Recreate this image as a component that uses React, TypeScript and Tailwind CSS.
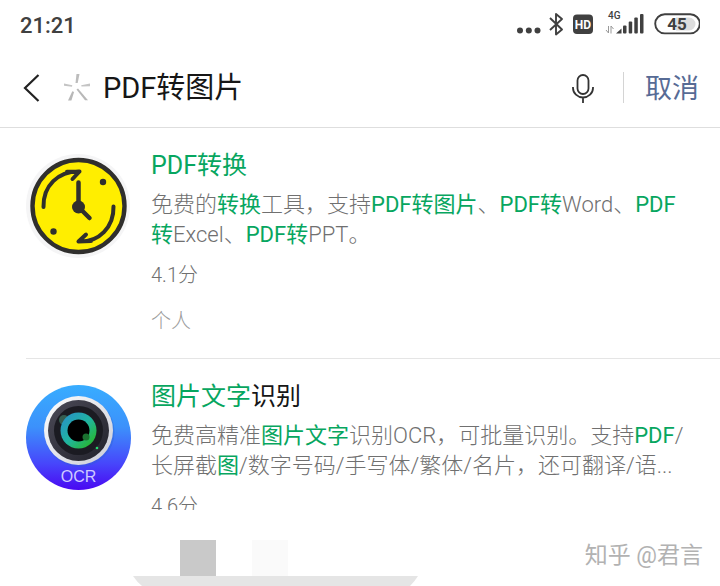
import type { ReactNode } from "react";

function Hit({ children }: { children: ReactNode }) {
  return <em className="font-normal not-italic text-[#07a660]">{children}</em>;
}

function StatusBar() {
  return (
    <div className="flex h-12 shrink-0 items-center justify-between px-5 text-[#404040]">
      <time className="pt-1 text-[22px] leading-7 font-medium">21:21</time>
      <svg width="184" height="32" viewBox="516 8 184 32" fill="none" aria-label="状态栏" role="img">
        <g fill="#404040">
          <circle cx="520" cy="30.500" r="3" />
          <circle cx="528.800" cy="30.500" r="3" />
          <circle cx="537.500" cy="30.500" r="3" />
        </g>
        <path d="M550 18L562 29.500L556 34.500V14L562 19L550 30" stroke="#404040" strokeWidth="1.900" strokeLinejoin="round" />
        <rect x="573" y="14.500" width="20" height="19.500" rx="4" fill="#404040" />
        <text x="583" y="29" textAnchor="middle" fontSize="12" fontWeight="700" fill="#fff">HD</text>
        <text x="608" y="19" fontSize="10" fontWeight="500" fill="#404040">4G</text>
        <path d="M606 30l2.500 3V26M611 33.500V26l2.500 3" stroke="#999" strokeWidth="1" />
        <g fill="#404040">
          <path d="M616 33.500l5.500-5v5z" />
          <rect x="623" y="25.500" width="3.500" height="8" rx="1" />
          <rect x="628.700" y="21.500" width="3.500" height="12" rx="1" />
          <rect x="634.300" y="17.500" width="3.500" height="16" rx="1" />
          <rect x="640" y="14" width="3.500" height="19.500" rx="1" />
        </g>
        <rect x="655.200" y="14.200" width="44.600" height="19.200" rx="9.600" stroke="#404040" strokeWidth="1.900" />
        <path d="M676 17.500h13a6.500 6.500 0 0 1 0 13h-13z" fill="#ddd" />
        <text x="677" y="30" textAnchor="middle" fontSize="17" fontWeight="700" fill="#404040">45</text>
      </svg>
    </div>
  );
}

function SearchBar() {
  return (
    <header className="flex h-20 shrink-0 items-center border-b border-[#dedede] pl-[23px] pr-[21px]">
      <button type="button" aria-label="返回" className="shrink-0">
        <svg width="18" height="28" viewBox="0 0 18 28" fill="none" stroke="#222" strokeWidth="2.200">
          <path d="M15.500 1L2 14l13.500 13" />
        </svg>
      </button>
      <svg className="ml-[22px] shrink-0" width="28" height="28" viewBox="0 0 28 28" aria-hidden="true">
        <path d="M13.500 0h3l-1.800 9h-2.200z" fill="#bcbcbc" />
        <path d="M1 9.500v2.300l8 1 .3-1.500z" fill="#c4c4c4" />
        <path d="M27 9.500v2.800l-8.500.3-.3-1.300z" fill="#c4c4c4" />
        <path d="M5 26.500l4.300-9.300 1.800.7-2.700 8.600z" fill="#b8b8b8" />
        <path d="M13.500 15.500l1.500-1 10 11.700h-3z" fill="#b8b8b8" />
      </svg>
      <input
        type="text"
        aria-label="搜索"
        defaultValue="PDF转图片"
        className="ml-3 h-10 min-w-0 flex-1 bg-transparent pt-px text-[29px] leading-10 text-[#161616] outline-none"
      />
      <button type="button" aria-label="语音搜索" className="shrink-0">
        <svg width="24" height="32" viewBox="0 0 24 32" fill="none" stroke="#333" strokeWidth="1.800">
          <rect x="6.500" y="3" width="11" height="19" rx="5.500" />
          <path d="M2 15v1a10 9.500 0 0 0 20 0V15M12 25.500V31" />
        </svg>
      </button>
      <span className="ml-7 h-[31px] w-px shrink-0 bg-[#d4d4d4]" />
      <button type="button" className="ml-[21px] shrink-0 pt-[2px] text-[27px] leading-10 text-[#576b95]">取消</button>
    </header>
  );
}

function ClockIcon() {
  return (
    <svg width="105" height="105" viewBox="0 0 105 105" fill="none" strokeLinecap="round" strokeLinejoin="round" aria-hidden="true">
      <circle cx="52" cy="52" r="52" fill="#f5f5f6" />
      <circle cx="52.500" cy="52" r="46" fill="#ffee00" stroke="#302f2d" strokeWidth="4.400" />
      <g stroke="#302f2d" strokeWidth="4">
        <path d="M17.500 53C17 32 32 17 53.500 17.500M41 17.800L53.500 17.500L46.500 25" />
        <path d="M87.500 52.500C88 73 73 88.500 52.500 87.500M60 80.500L52.500 87.500L65 87" />
        <path d="M52.500 28.500V53L63.500 64" strokeWidth="4.500" />
      </g>
      <circle cx="52.500" cy="53" r="6.500" fill="#302f2d" />
      <circle cx="77" cy="28" r="3.200" fill="#302f2d" />
      <circle cx="27.500" cy="77.500" r="3.200" fill="#302f2d" />
    </svg>
  );
}

function OcrIcon() {
  return (
    <svg width="105" height="105" viewBox="0 0 105 105" aria-hidden="true">
      <defs>
        <linearGradient id="sky" x1="0" y1="0" x2="0" y2="1">
          <stop offset="0" stopColor="#38adff" />
          <stop offset=".4" stopColor="#3c91fb" />
          <stop offset=".75" stopColor="#4746fb" />
          <stop offset="1" stopColor="#4a08f2" />
        </linearGradient>
        <linearGradient id="rim" x1="0" y1="0" x2="1" y2="1">
          <stop offset="0" stopColor="#fff" />
          <stop offset="1" stopColor="#c9cbd6" />
        </linearGradient>
        <linearGradient id="iris" x1="0" y1="0" x2="1" y2="1">
          <stop offset="0.100" stopColor="#2795c5" />
          <stop offset=".5" stopColor="#20b4a0" />
          <stop offset=".9" stopColor="#28b62c" />
        </linearGradient>
        <linearGradient id="lens" x1="0" y1="0" x2="1" y2="1">
          <stop offset="0" stopColor="#4b4a57" />
          <stop offset="1" stopColor="#22222b" />
        </linearGradient>
      </defs>
      <circle cx="52.500" cy="52.500" r="52.500" fill="url(#sky)" />
      <circle cx="53.500" cy="47" r="35" fill="#2860cf" opacity=".35" />
      <circle cx="52.500" cy="45.500" r="34.500" fill="url(#rim)" />
      <circle cx="52.500" cy="45.500" r="30.500" fill="url(#lens)" />
      <circle cx="52.500" cy="45.500" r="24.500" fill="#1b1b22" />
      <circle cx="38" cy="35" r="5" fill="#355d50" />
      <circle cx="52.500" cy="45.500" r="18" fill="url(#iris)" />
      <circle cx="52.500" cy="45.500" r="11" fill="#000" />
      <circle cx="60" cy="52" r="3.500" fill="#1b7130" />
      <circle cx="71" cy="63" r="1.300" fill="#28d86c" />
      <text x="52.500" y="97" textAnchor="middle" fontSize="16" fill="#cfcaff" className="font-['Liberation_Sans',sans-serif]">OCR</text>
    </svg>
  );
}

type ResultProps = { icon: ReactNode; title: ReactNode; text: ReactNode; score: string; owner: string };

function Result({ icon, title, text, score, owner }: ResultProps) {
  return (
    <li className="ml-[26px] border-b border-[#e5e5e5] pt-5 pb-[22px]">
      <article className="flex gap-5 pr-7">
        <div className="mt-[6px] shrink-0">{icon}</div>
        <div className="min-w-0 flex-1 font-light text-[#707070]">
          <h2 className="text-[25px] leading-9 font-normal text-[#161616]">{title}</h2>
          <p className="mt-[6px] text-[22px] leading-[30px]">{text}</p>
          <p className="mt-[10px] text-[20px] leading-[30px]">{score}</p>
          <p className="mt-4 text-[20px] leading-[30px] text-[#9c9c9c]">{owner}</p>
        </div>
      </article>
    </li>
  );
}

export default function App() {
  return (
    <div lang="zh-CN" className="flex h-screen flex-col overflow-hidden bg-white font-[Roboto,'Noto_Sans_CJK_SC',sans-serif]">
      <StatusBar />
      <SearchBar />
      <main className="min-h-0 flex-1 overflow-hidden">
        <ul>
          <Result
            icon={<ClockIcon />}
            title={<span className="text-[#07a660]">PDF转换</span>}
            text={
              <>
                免费的<Hit>转换</Hit>工具，支持<Hit>PDF转图片</Hit>、<Hit>PDF转</Hit>Word、<Hit>PDF转</Hit>Excel、<Hit>PDF转</Hit>PPT。
              </>
            }
            score="4.1分"
            owner="个人"
          />
          <Result
            icon={<OcrIcon />}
            title={<><span className="text-[#07a660]">图片文字</span>识别</>}
            text={
              <>
                免费高精准<Hit>图片文字</Hit>识别OCR，可批量识别。支持<Hit>PDF</Hit>/长屏截<Hit>图</Hit>/数字号码/手写体/繁体/名片，还可翻译/语...
              </>
            }
            score="4.6分"
            owner="个人"
          />
        </ul>
      </main>
      <footer className="shrink-0 pt-[30px]">
        <div className="flex h-9 items-center pr-[17px] pl-[180px]">
          <span className="size-9 bg-[#c9c9c9]" />
          <span className="ml-9 size-9 bg-[#fafafa]" />
          <span className="ml-auto pb-1 text-[23px] leading-8 text-[#b2b2b2]">知乎 @君言</span>
        </div>
        <svg className="ml-[133px] block" width="285" height="10" viewBox="0 0 285 10" aria-hidden="true">
          <path d="M0 0H285Q282 5 277 10H9Q4 6 0 0z" fill="#e5e5e5" />
        </svg>
      </footer>
    </div>
  );
}
